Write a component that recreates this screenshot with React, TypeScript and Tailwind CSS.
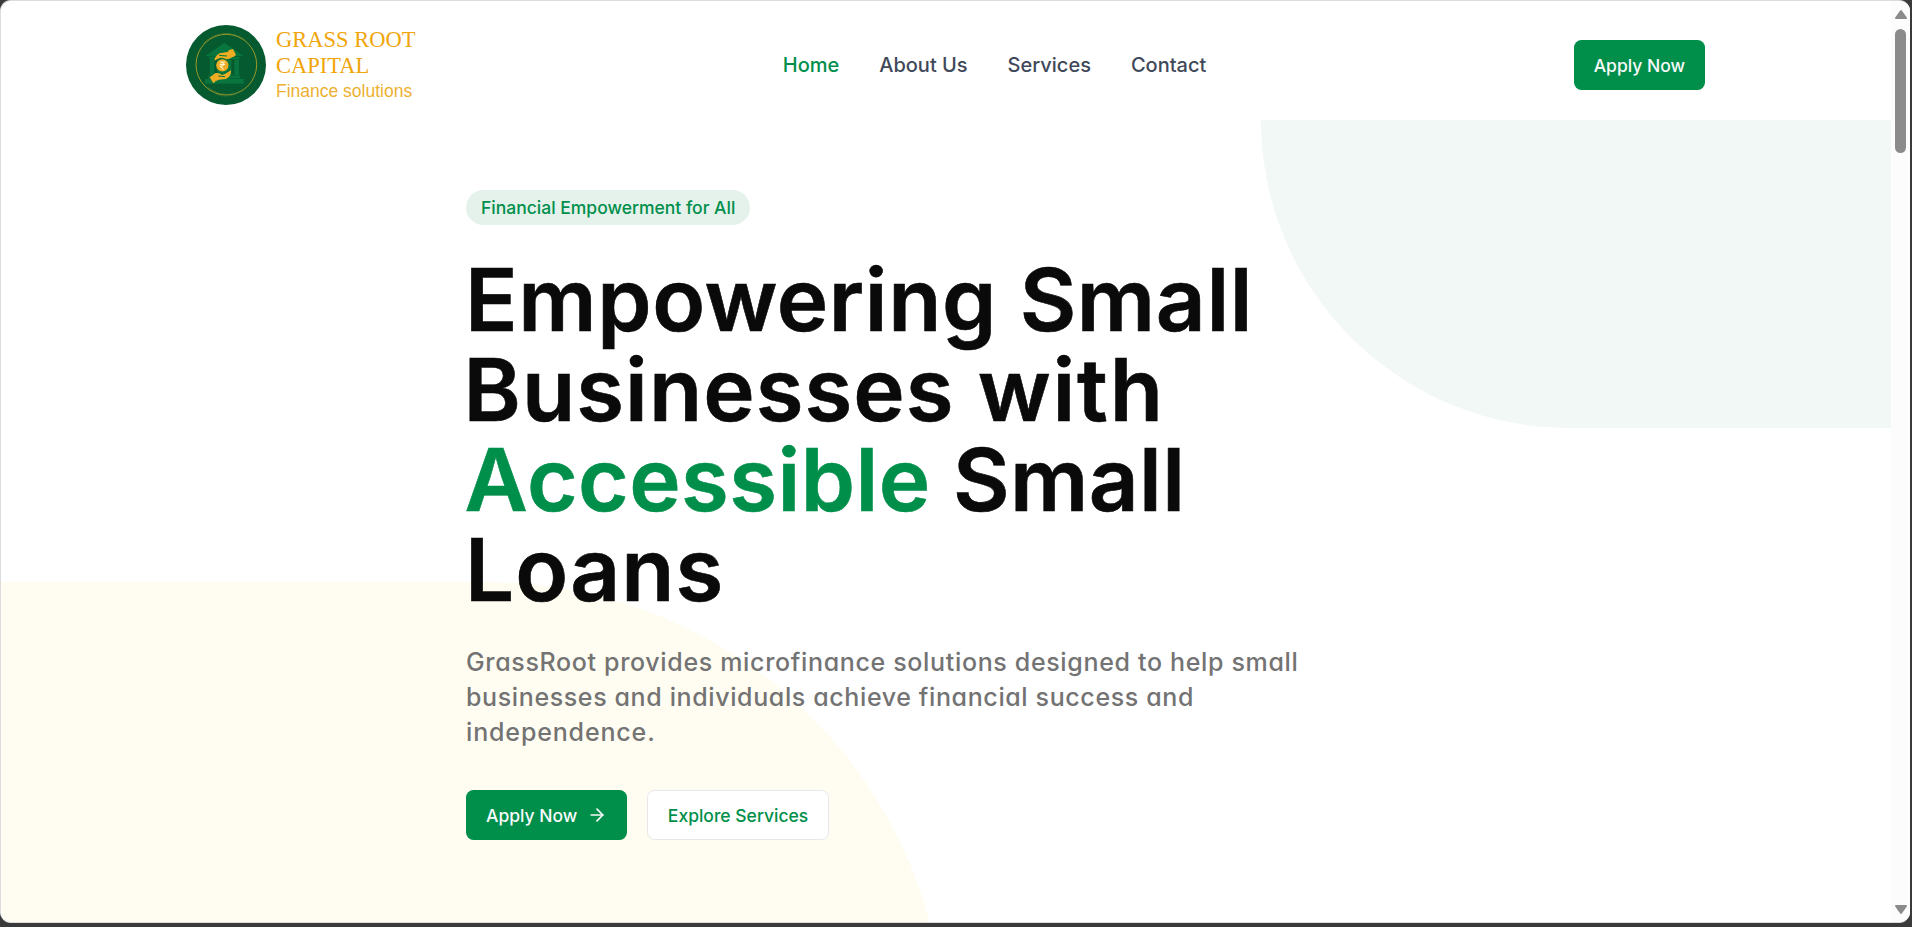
import { ArrowRight } from "lucide-react";

const NAV_ITEMS = [
  { label: "Home", active: true },
  { label: "About Us", active: false },
  { label: "Services", active: false },
  { label: "Contact", active: false },
];

function Emblem() {
  return (
    <svg viewBox="0 0 240 240" className="size-20 shrink-0" aria-hidden="true">
      <circle cx="120" cy="120" r="120" fill="#055a2f" />
      <circle cx="121" cy="119" r="91" fill="none" stroke="#b3a52c" strokeWidth="2.6" />
      <path d="M52 56 A92 92 0 0 1 176 44" fill="none" stroke="#5f8230" strokeWidth="2" />
      <path d="M66 188 A92 92 0 0 0 176 192" fill="none" stroke="#5f8230" strokeWidth="2" />
      <path d="M88 208 A94 94 0 0 0 154 206" fill="none" stroke="#3f7330" strokeWidth="2" />
      <g fill="#08753f">
        <path d="M57 94 L115 53 L173 94 Z" />
        <rect x="70" y="96" width="90" height="7" />
        <rect x="72" y="104" width="13" height="46" />
        <rect x="145" y="104" width="14" height="46" />
        <rect x="94" y="104" width="42" height="56" />
        <rect x="68" y="151" width="94" height="9" />
        <rect x="57" y="162" width="116" height="14" />
      </g>
      <g fill="#eead22">
        <path d="M85 107 C87 96 94 86 105 84 L124 81 C129 76 135 75 140 78 L147 91 C139 98 131 103 120 103 C113 98 102 97 96 101 Z" />
        <path d="M127 76 L141 72 L150 90 L142 96 L136 91 Z" />
        <circle cx="109" cy="121" r="18.5" />
        <path d="M74 155 L87 145 C95 143 103 146 108 150 L117 147 L135 136 C136 147 130 158 120 162 L98 164 L90 168 Z" />
        <path d="M71 157 L79 153 L90 168 L82 175 Z" />
      </g>
      <path d="M99 91 L123 93" stroke="#08753f" strokeWidth="3" />
      <path d="M97 153 L117 155" stroke="#08753f" strokeWidth="3" />
      <path
        d="M101 111 H117 M101 118 H117 M104 111 C115 111 115 124 103 124 L113 134"
        fill="none"
        stroke="#fff3cf"
        strokeWidth="3.4"
      />
    </svg>
  );
}

function Header() {
  return (
    <header className="flex h-[119px] shrink-0 items-center justify-between bg-white pb-px pl-[185px] pr-[186px] pt-[10px]">
      <a className="flex items-center gap-[10px]">
        <Emblem />
        <span className="flex flex-col text-[#f0a50a]">
          <span className="font-['Liberation_Serif',serif] text-[22.5px] leading-[26px]">GRASS ROOT</span>
          <span className="font-['Liberation_Serif',serif] text-[22.5px] leading-[26px]">CAPITAL</span>
          <span className="font-['Liberation_Sans',sans-serif] text-[17.5px] leading-[25px] text-[#edb030]">
            Finance solutions
          </span>
        </span>
      </a>
      <nav className="flex gap-10 text-[20px] font-medium leading-[30px]">
        {NAV_ITEMS.map((item) => (
          <a key={item.label} className={item.active ? "text-[#008f4b]" : "text-[#3f4959]"}>
            {item.label}
          </a>
        ))}
      </nav>
      <button className="h-[50px] rounded-[7.5px] bg-[#008f4b] px-5 pt-[2px] text-[17.5px] font-medium text-[#f8fafc]">
        Apply Now
      </button>
    </header>
  );
}

function Hero() {
  return (
    <section className="relative h-[922px] shrink-0 bg-white">
      <div className="absolute right-0 top-0 h-[308px] w-1/3 rounded-bl-full bg-[#f2f8f6]" />
      <div className="absolute bottom-0 left-0 h-[460px] w-1/2 rounded-tr-full bg-[#fffdf2]" />
      <div className="relative flex flex-col items-start pl-[465px] pt-[70px]">
        <span className="h-[35px] rounded-full bg-[#e5f2ec] px-[15px] py-[5px] text-[17.5px] font-medium leading-[25px] text-[#008f4b]">
          Financial Empowerment for All
        </span>
        <h1 className="-ml-[1px] mt-[30px] text-[87px] font-semibold leading-[90px] text-[#0a0a0a] [-webkit-text-stroke:0.6px]">
          <span className="block tracking-[0.62px]">Empowering Small</span>
          <span className="-ml-[1.5px] block">
            <span className="tracking-[1.05px]">Businesses </span>
            <span className="tracking-[1.8px]">with</span>
          </span>
          <span className="-ml-[0.5px] block">
            <span className="tracking-[0.45px] text-[#008f4b]">Accessible</span>
            <span className="tracking-[0.4px]"> Small</span>
          </span>
          <span className="block tracking-[1.1px]">Loans</span>
        </h1>
        <p className="mt-[30px] text-[25px] font-medium leading-[35px] text-[#737373] [font-feature-settings:'cv11']">
          <span className="block tracking-[0.66px]">
            GrassRoot provides microfinance solutions designed to help small
          </span>
          <span className="block tracking-[0.62px]">businesses and individuals achieve financial success and</span>
          <span className="block tracking-[0.85px]">independence.</span>
        </p>
        <div className="mt-10 flex gap-5 text-[17.5px] font-medium">
          <button className="flex h-[50px] items-center gap-[10px] rounded-[7.5px] bg-[#008f4b] px-5 text-[#f8fafc]">
            <span className="pt-[2px]">Apply Now</span>
            <ArrowRight size={20} />
          </button>
          <button className="h-[50px] rounded-[7.5px] border border-gray-200 bg-white px-[19.5px] pt-[2px] text-[#008f4b]">
            Explore Services
          </button>
        </div>
      </div>
    </section>
  );
}

function Scrollbar() {
  return (
    <div className="flex w-[19px] shrink-0 flex-col items-center bg-[#fcfcfc] pt-[8px]">
      <svg viewBox="0 0 14 11" className="h-[11px] w-[14px]" aria-hidden="true">
        <path d="M7 2 L12 9 H2 Z" fill="#8b8b8b" stroke="#8b8b8b" strokeWidth="2" strokeLinejoin="round" />
      </svg>
      <div className="mt-[9px] h-[124px] w-[11px] rounded-full bg-[#8b8b8b]" />
      <svg viewBox="0 0 14 11" className="mb-[7px] mt-auto h-[11px] w-[14px]" aria-hidden="true">
        <path d="M7 9 L12 2 H2 Z" fill="#8b8b8b" stroke="#8b8b8b" strokeWidth="2" strokeLinejoin="round" />
      </svg>
    </div>
  );
}

export default function App() {
  return (
    <div className="h-[927px] w-full overflow-hidden bg-[#3a3a3a] pr-[2px] font-['Inter',sans-serif]">
      <div className="flex h-[923px] overflow-hidden rounded-[11px] border-y border-l border-[#dcdcdc] bg-white">
        <main className="flex min-w-0 flex-1 flex-col overflow-hidden">
          <Header />
          <Hero />
        </main>
        <Scrollbar />
      </div>
    </div>
  );
}
